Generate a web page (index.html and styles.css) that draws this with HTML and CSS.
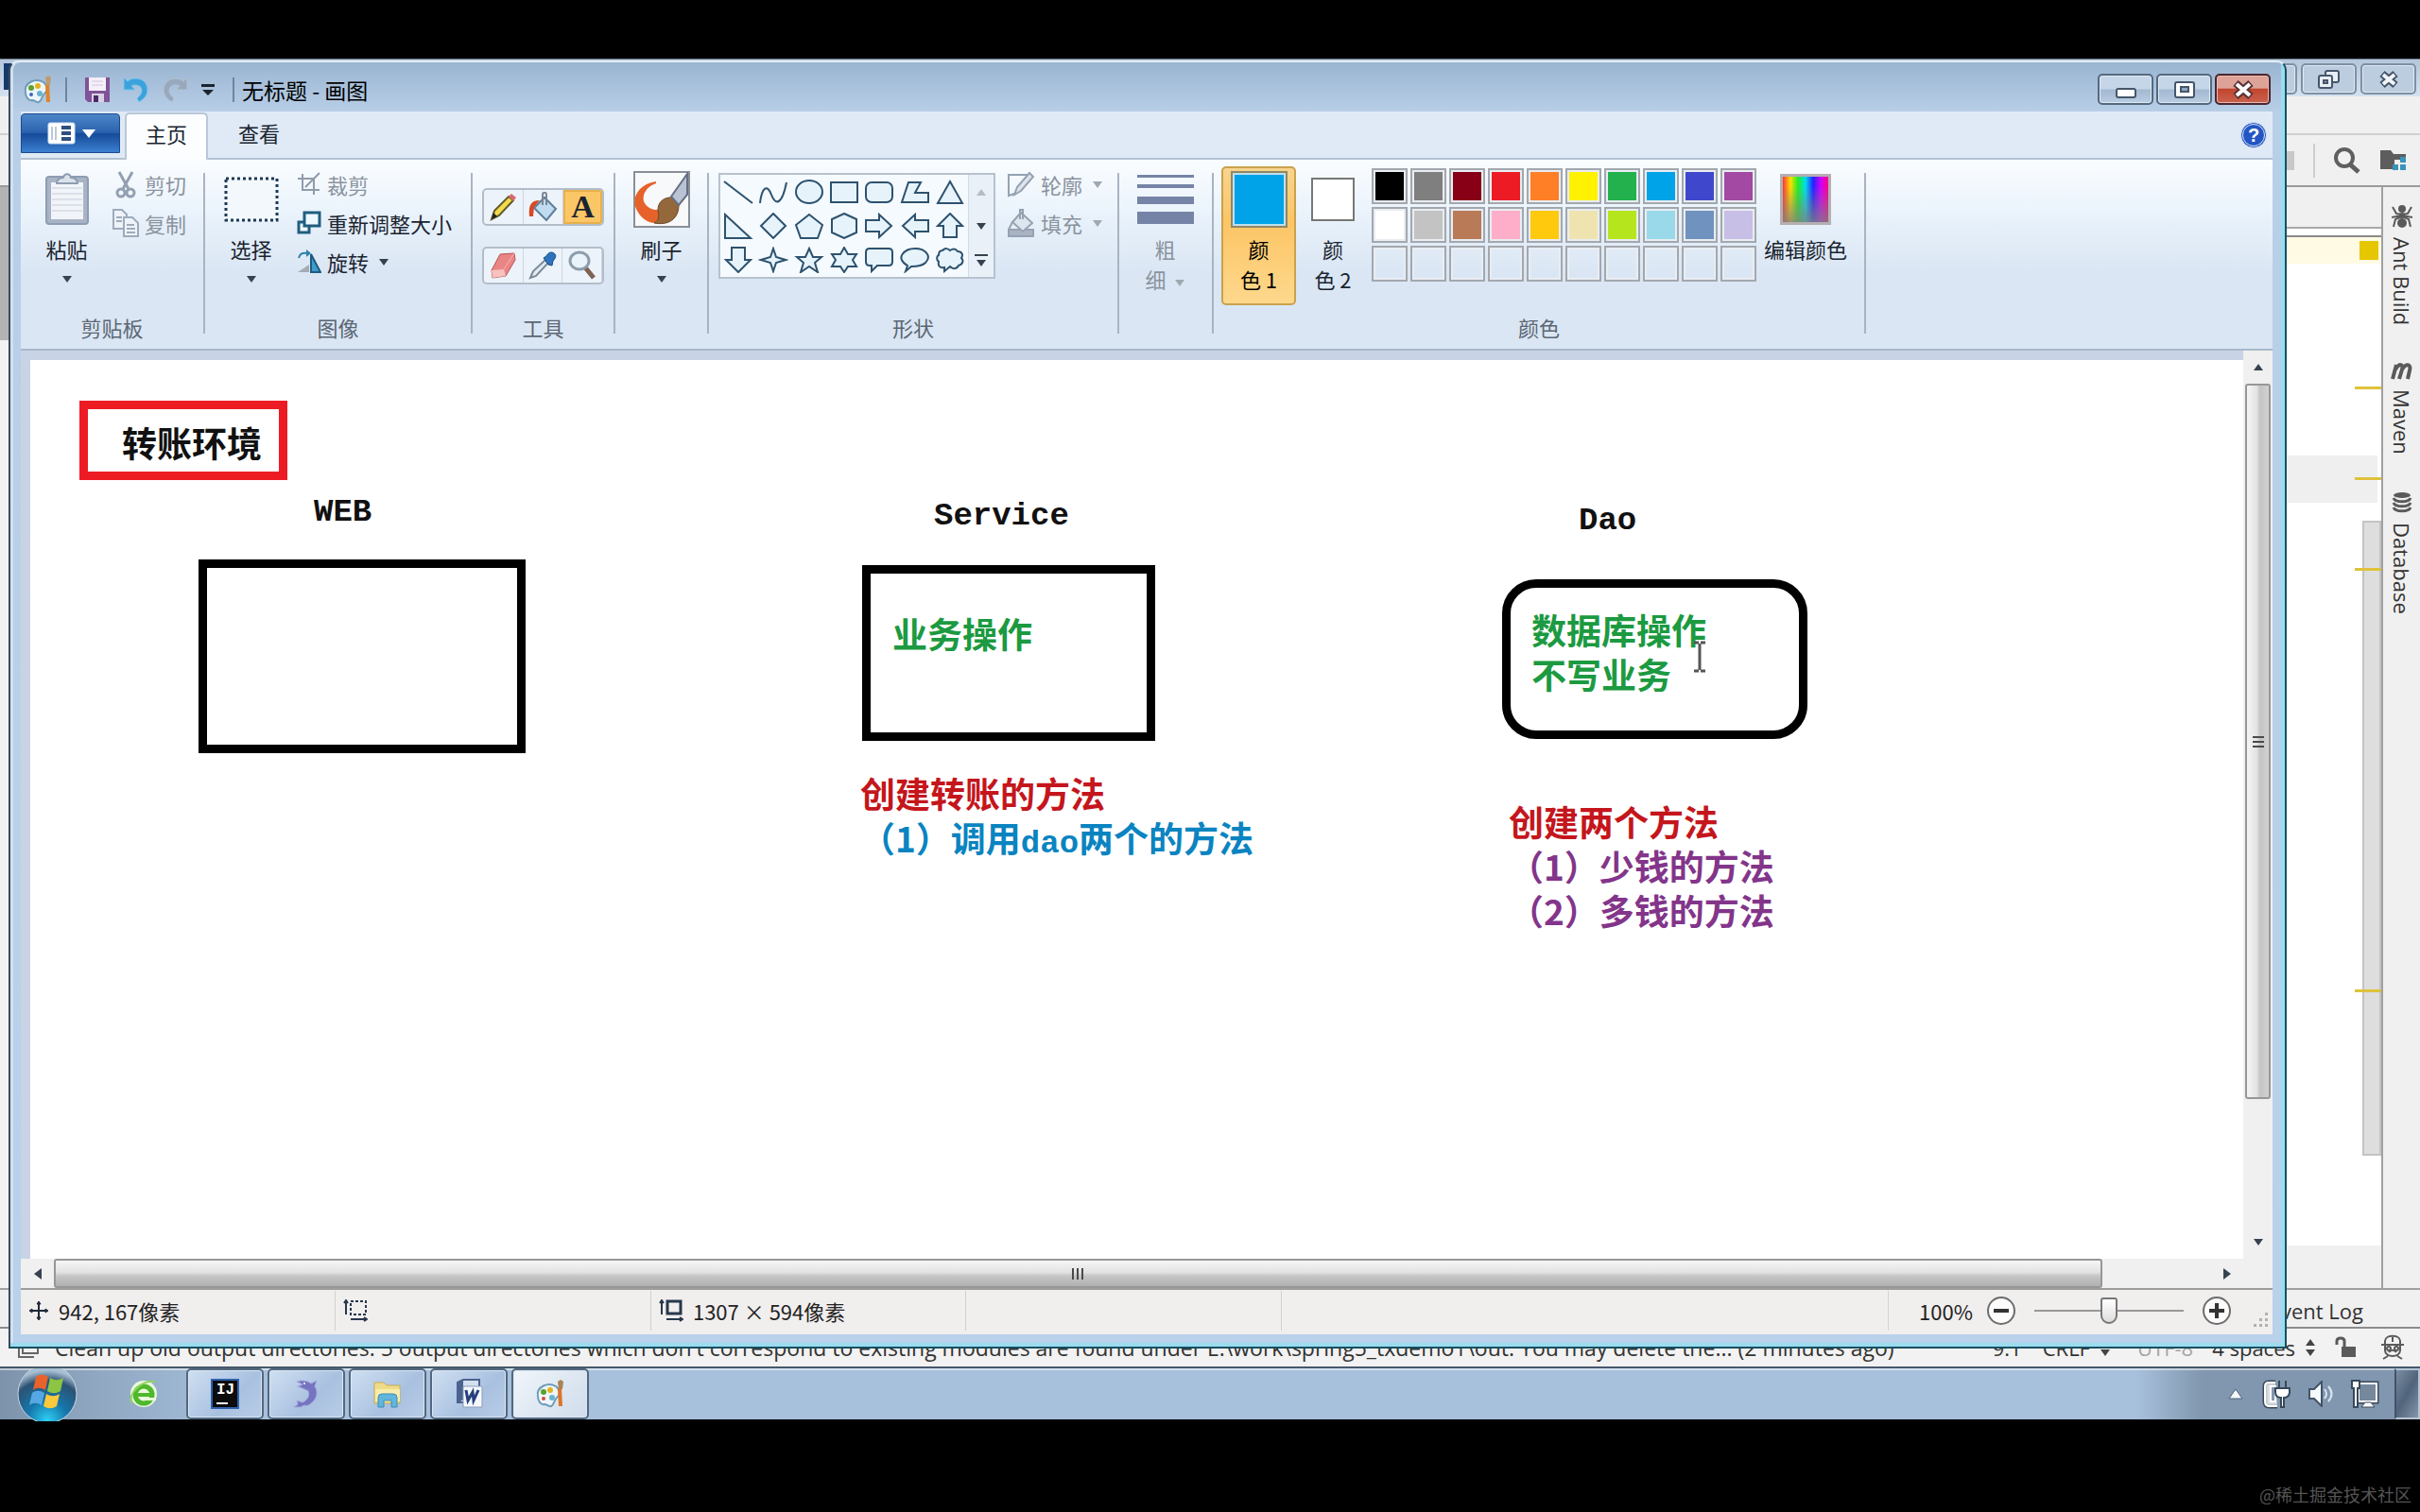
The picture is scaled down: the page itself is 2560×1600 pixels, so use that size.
FILE: index.html
```
<!DOCTYPE html>
<html lang="zh-CN">

<head>
    <meta charset="UTF-8" />
    <title>无标题 - 画图</title>
    <link rel="stylesheet" href="styles.css">
</head>

<body>
    <div class="desktop">

        <!-- IDE behind the paint window -->
        <div class="ide">
            <div class="ide-title">
                <span class="ide-logo"></span>
                <button class="win-btn faded" aria-label="最小化"></button>
                <button class="win-btn faded" aria-label="还原">
                    <svg width="26" height="22" viewBox="0 0 26 22"><g fill="#e8eef5" stroke="#46566a" stroke-width="2"><rect x="9" y="2" width="14" height="12" rx="2" /><rect x="2" y="7" width="14" height="13" rx="2" /><rect x="7" y="12" width="4" height="3" fill="#9fb2c8" /></g></svg>
                </button>
                <button class="win-btn faded" aria-label="关闭">
                    <svg width="24" height="20" viewBox="0 0 24 20"><path d="M5 4L19 16M19 4L5 16" stroke="#46566a" stroke-width="8" /><path d="M6 5L18 15M18 5L6 15" stroke="#f2f5f8" stroke-width="4" /></svg>
                </button>
            </div>
            <div class="ide-menu"></div>
            <div class="ide-toolbar">
                <span class="stop"></span>
                <span class="line"></span>
                <svg width="28" height="28" viewBox="0 0 28 28" fill="none" stroke="#5f5f5f" stroke-width="4"><circle cx="11" cy="11" r="9" /><path d="M17 18L26 26" stroke-width="5" /></svg>
                <svg width="30" height="26" viewBox="0 0 30 26"><path d="M1 2h11l3 4h13v6H16v10H1z" fill="#5d5d5d" /><path d="M22 9h6v6h-6zM14 17h6v6h-6zM22 17h6v6h-6z" fill="#3a93bb" /></svg>
            </div>
            <div class="ide-main">
                <div class="ide-left"></div>
                <div class="editor">
                    <div class="editor-tabs"></div>
                    <div class="editor-notice"><span class="warn"></span></div>
                    <div class="editor-code">
                        <div class="caret-row"></div>
                        <div class="thumb"></div>
                        <i class="mark mark-a"></i>
                        <i class="mark mark-b"></i>
                        <i class="mark mark-c"></i>
                        <i class="mark mark-d"></i>
                    </div>
                    <div class="editor-foot"></div>
                </div>
                <div class="ide-side">
                    <a href="#ant">
                        <svg width="22" height="26" viewBox="0 0 22 26"><g fill="#5a5a5a"><circle cx="11" cy="5" r="4" /><circle cx="11" cy="12" r="3" /><ellipse cx="11" cy="20" rx="5" ry="5" /></g><path d="M1 3l4 7 6 1 6-1 4-7M0 14l11-2 11 2M2 24l2-8 7-3 7 3 2 8" fill="none" stroke="#5a5a5a" stroke-width="2" /></svg>
                        <span>Ant Build</span>
                    </a>
                    <a href="#maven">
                        <svg width="24" height="20" viewBox="0 0 24 20"><path d="M2 18L6 3M5 8C9 1 14 2 12 8L9 18M12 8c4-7 10-6 8 1l-2 9" fill="none" stroke="#5a5a5a" stroke-width="4" /></svg>
                        <span>Maven</span>
                    </a>
                    <a href="#database">
                        <svg width="22" height="24" viewBox="0 0 22 24"><ellipse cx="11" cy="4" rx="9" ry="3" fill="#5a5a5a" /><path d="M2 7c2 5 16 5 18 0M2 12c2 5 16 5 18 0M2 17c2 5 16 5 18 0" fill="none" stroke="#5a5a5a" stroke-width="3" /></svg>
                        <span>Database</span>
                    </a>
                </div>
            </div>
            <div class="ide-tools">Event Log</div>
            <div class="ide-status">
                <svg class="box-icon" width="24" height="24" viewBox="0 0 24 24" fill="none" stroke="#666" stroke-width="2"><path d="M6 2h16v16H6zM2 6v16h16" /></svg>
                <span class="message">Clean up old output directories: 5 output directories which don't correspond to existing modules are found under E:\work\spring5_txdemo1\out. You may delete the... (2 minutes ago)</span>
                <span class="pos">9:1</span>
                <span class="crlf">CRLF</span>
                <svg class="updown" width="12" height="20" viewBox="0 0 12 20"><path d="M6 1l5 7H1zM6 19l5-7H1z" fill="#444" /></svg>
                <span class="muted">UTF-8</span>
                <span class="indent">4 spaces</span>
                <svg class="updown" width="12" height="20" viewBox="0 0 12 20"><path d="M6 1l5 7H1zM6 19l5-7H1z" fill="#444" /></svg>
                <svg class="lock" width="24" height="24" viewBox="0 0 24 24"><path d="M2 9V5c0-4 8-4 8 0v6" fill="none" stroke="#5a5a5a" stroke-width="3" /><path d="M7 11h15v11H7z" fill="#5a5a5a" /></svg>
                <svg class="hector" width="26" height="28" viewBox="0 0 26 28" fill="none" stroke="#5a5a5a" stroke-width="2"><path d="M5 10V7c0-7 16-7 16 0v3M1 11h24M5 12v5c0 8 16 8 16 0v-5M3 26l5-3M23 26l-5-3M13 3v5M9 19c2-3 6-3 8 0" /><circle cx="9" cy="15" r="2" /><circle cx="17" cy="15" r="2" /></svg>
            </div>
        </div>

        <!-- Paint window -->
        <div class="window">
            <div class="titlebar">
                <svg width="32" height="32" viewBox="0 0 32 32"><path d="M3 19C1 8 14 3 22 8c5 4 5 9 1 12-3 2-2 7-6 9-3 1-4-2-7-2-4 1-7-4-7-8z" fill="#eef6fb" stroke="#6f9cb8" stroke-width="2" /><circle cx="9" cy="14" r="3" fill="#5aa12f" /><circle cx="16" cy="12" r="3" fill="#e2b41c" /><circle cx="9" cy="21" r="2" fill="#3f66c4" /><circle cx="18" cy="20" r="3" fill="#67b4cd" /><path d="M26 10l1 19" stroke="#df8426" stroke-width="4" /><path d="M24 3l3-2 3 2-1 8h-4z" fill="#bd9c72" /></svg>
                <span class="bar"></span>
                <button class="quick" aria-label="保存">
                    <svg width="28" height="28" viewBox="0 0 28 28"><path d="M1 1h26v26H4l-3-3z" fill="#815398" /><path d="M5 1h18v14H5z" fill="#f5eff9" /><path d="M8 5h12M8 9h12" stroke="#cfc4da" stroke-width="1" /><path d="M8 18h13v9H8z" fill="#d8d2e4" /><path d="M10 20h5v7h-5z" fill="#4b2a66" /></svg>
                </button>
                <button class="quick" aria-label="撤消">
                    <svg width="28" height="28" viewBox="0 0 28 28"><path d="M1 1l4 4c2-2 5-3 8-3 9 0 13 6 13 12 0 6-4 10-9 13l-2-4c3-3 5-5 5-8 0-4-3-6-7-6-2 0-3 0-4 1l4 4H1z" fill="#3ba2dc" stroke="#7dc6ec" stroke-width="1" /></svg>
                </button>
                <button class="quick" aria-label="重做">
                    <svg width="28" height="28" viewBox="0 0 28 28"><path d="M27 1l-4 4c-2-2-5-3-8-3C6 2 2 8 2 14c0 6 4 10 9 13l2-4c-3-3-5-5-5-8 0-4 3-6 7-6 2 0 3 0 4 1l-4 4h12z" fill="#98a9be" stroke="#b5c3d3" stroke-width="1" /></svg>
                </button>
                <button class="quick" aria-label="自定义快速访问工具栏">
                    <svg width="16" height="14" viewBox="0 0 16 14"><path d="M1 1h14v3H1zM2 7h12l-6 6z" fill="#1b2430" /></svg>
                </button>
                <span class="bar"></span>
                <span class="caption">无标题 - 画图</span>
                <div class="win-btns">
                    <button class="win-btn" aria-label="最小化">
                        <svg width="24" height="20" viewBox="0 0 24 20"><rect x="2" y="9" width="20" height="9" rx="2" fill="#fff" stroke="#46566a" stroke-width="2" /></svg>
                    </button>
                    <button class="win-btn" aria-label="最大化">
                        <svg width="24" height="20" viewBox="0 0 24 20"><rect x="2" y="2" width="20" height="16" rx="2" fill="#fff" stroke="#46566a" stroke-width="2" /><rect x="8" y="7" width="8" height="5" fill="#8fa6bf" stroke="#46566a" stroke-width="2" /></svg>
                    </button>
                    <button class="win-btn close" aria-label="关闭">
                        <svg width="24" height="20" viewBox="0 0 24 20"><path d="M4 3L20 17M20 3L4 17" stroke="#5a3236" stroke-width="8" /><path d="M5 4L19 16M19 4L5 16" stroke="#fff" stroke-width="4" /></svg>
                    </button>
                </div>
            </div>

            <div class="tabs">
                <button class="file-btn" aria-label="画图">
                    <svg width="52" height="26" viewBox="0 0 52 26"><rect x="2" y="2" width="28" height="22" rx="2" fill="#fff" stroke="#cfe0f5" stroke-width="1" /><path d="M6 6v14M10 6v14" stroke="#bcc8d8" stroke-width="2" /><path d="M16 5h10v4H16zM16 11h10v4H16zM16 17h10v4H16z" fill="#2f4f80" /><path d="M38 9h14l-7 9z" fill="#fff" /></svg>
                </button>
                <button class="tab active">主页</button>
                <button class="tab">查看</button>
                <button class="help" aria-label="帮助">?</button>
            </div>

            <div class="ribbon">
                <div class="group clipboard">
                    <div class="group-body">
                        <button class="big">
                            <span class="pic"><svg width="48" height="56" viewBox="0 0 48 56"><rect x="2" y="4" width="44" height="50" rx="3" fill="#a8b4c5" stroke="#8f9db2" stroke-width="2" /><path d="M7 10h34v39H7z" fill="#f1f4f9" /><path d="M8 16h32M8 22h32M8 28h32M8 34h32M8 40h32" stroke="#dbe1ea" stroke-width="2" /><path d="M13 11c0-5 5-6 7-6 1-5 7-5 8 0 2 0 7 1 7 6z" fill="#dbe2eb" stroke="#8f9db2" stroke-width="2" /></svg></span>
                            <span>粘贴</span>
                            <span class="arrow"></span>
                        </button>
                        <div class="rows">
                            <button class="small" disabled>
                                <svg width="28" height="30" viewBox="0 0 28 30" fill="none" stroke="#93a0b2" stroke-width="3"><path d="M7 2l10 18M21 2L11 20" /><circle cx="9" cy="24" r="4" /><circle cx="19" cy="24" r="4" /></svg>
                                剪切
                            </button>
                            <button class="small" disabled>
                                <svg width="28" height="30" viewBox="0 0 28 30" fill="#eef3f9" stroke="#9eabbd" stroke-width="2"><path d="M1 1h9l5 5v15H1z" /><path d="M12 9h9l6 6v14H12z" /><path d="M15 17h8M15 21h9M15 25h9M4 9h6M4 13h6" /></svg>
                                复制
                            </button>
                        </div>
                    </div>
                    <div class="group-name">剪贴板</div>
                </div>
                <div class="sep"></div>

                <div class="group image">
                    <div class="group-body">
                        <button class="big">
                            <span class="pic"><svg width="58" height="48" viewBox="0 0 58 48"><rect x="2" y="2" width="54" height="44" fill="#f3f8fd" stroke="#1d3a55" stroke-width="3" stroke-dasharray="3 3" /></svg></span>
                            <span>选择</span>
                            <span class="arrow"></span>
                        </button>
                        <div class="rows">
                            <button class="small" disabled>
                                <svg width="26" height="26" viewBox="0 0 26 26" fill="none" stroke="#8f9bac" stroke-width="2"><path d="M6 2v17h18M1 7h17v17M24 1L9 16" /></svg>
                                裁剪
                            </button>
                            <button class="small">
                                <svg width="26" height="26" viewBox="0 0 26 26" fill="#eef8fd" stroke="#205d80" stroke-width="3"><path d="M2 12h11v11H2z" /><path d="M8 2h16v14H8z" /></svg>
                                重新调整大小
                            </button>
                            <button class="small">
                                <svg width="26" height="26" viewBox="0 0 26 26"><path d="M1 24l12-8v8z" fill="#a5abb3" /><path d="M15 24V5l10 19z" fill="#3c9ccc" stroke="#1e5a80" stroke-width="2" /><path d="M2 9c1-5 5-6 9-5" fill="none" stroke="#2f80ad" stroke-width="2" /><path d="M10 0l5 4-5 4z" fill="#2f80ad" /></svg>
                                旋转 <span class="arrow"></span>
                            </button>
                        </div>
                    </div>
                    <div class="group-name">图像</div>
                </div>
                <div class="sep"></div>

                <div class="group tools">
                    <div class="group-body">
                        <div class="tool-row">
                            <button aria-label="铅笔"><svg width="32" height="32" viewBox="0 0 32 32"><path d="M3 29l3-9L21 5l5 4-15 16z" fill="#f1da4c" stroke="#625a2c" stroke-width="2" /><path d="M21 5l3-3 5 4-3 4z" fill="#d76a6e" /><path d="M3 29l2-7 4 4z" fill="#222" /></svg></button>
                            <button aria-label="用颜色填充"><svg width="34" height="32" viewBox="0 0 34 32"><path d="M7 17L18 6l12 12-10 12z" fill="#bfdcf0" stroke="#5f7e9b" stroke-width="2" /><path d="M16 14V3c0-3 4-3 4 0v11" fill="none" stroke="#7b8794" stroke-width="2" /><path d="M2 26C1 15 3 9 13 9l-6 7-1 10z" fill="#d64a25" /></svg></button>
                            <button class="on letter" aria-label="文本">A</button>
                        </div>
                        <div class="tool-row">
                            <button aria-label="橡皮擦"><svg width="34" height="30" viewBox="0 0 34 30"><path d="M5 20L14 3l15-1 1 7-10 17-14 2z" fill="#ea8585" stroke="#b65555" stroke-width="1" /><path d="M5 20l13-1 2 7-14 2z" fill="#f7c2bf" /><path d="M18 19L29 2" stroke="#f5b5b2" stroke-width="1" /></svg></button>
                            <button aria-label="颜色选取器"><svg width="32" height="32" viewBox="0 0 32 32"><path d="M3 29l3-7 13-12 3 3L9 27z" fill="#e3ecf3" stroke="#7b8b9b" stroke-width="2" /><path d="M17 8l3-2c2-4 5-5 8-3s2 5-1 8l-1 5-4-1z" fill="#2e74bc" stroke="#184b86" stroke-width="1" /></svg></button>
                            <button aria-label="放大镜"><svg width="32" height="32" viewBox="0 0 32 32"><path d="M19 18l9 11" stroke="#7e6254" stroke-width="5" /><ellipse cx="13" cy="11" rx="10" ry="9" fill="#e9f3fa" stroke="#8d9dab" stroke-width="3" /></svg></button>
                        </div>
                    </div>
                    <div class="group-name">工具</div>
                </div>
                <div class="sep"></div>

                <div class="group brush">
                    <div class="group-body">
                        <button class="big">
                            <span class="pic"><svg width="60" height="60" viewBox="0 0 60 60"><rect x="1" y="1" width="58" height="58" fill="#f7f9fb" stroke="#8a8f97" stroke-width="2" /><path d="M24 11C4 14-2 30 3 40c4 9 12 15 20 15 4-4 6-9 5-15-6 3-14-1-17-8-2-8 4-16 13-19z" fill="#e6622a" /><path d="M26 41c0-8 6-14 16-13l6 8C48 50 38 58 22 55c6-3 5-8 4-14z" fill="#94683a" stroke="#6c4725" stroke-width="1" /><path d="M40 27L57 3v22l-9 11z" fill="#b9c3d4" stroke="#646f84" stroke-width="2" /></svg></span>
                            <span>刷子</span>
                            <span class="arrow"></span>
                        </button>
                    </div>
                </div>
                <div class="sep"></div>

                <div class="group shapes">
                    <div class="group-body">
                        <div class="shape-box">
                            <div class="shape-grid">
                                <button aria-label="直线"><svg viewBox="0 0 32 28"><path d="M1 3L31 26" /></svg></button>
                                <button aria-label="曲线"><svg viewBox="0 0 32 28"><path d="M2 26C4 8 10 6 14 17s11 12 16-13" /></svg></button>
                                <button aria-label="椭圆形"><svg viewBox="0 0 32 28"><ellipse cx="16" cy="14" rx="14" ry="12" /></svg></button>
                                <button aria-label="矩形"><svg viewBox="0 0 32 28"><path d="M2 4h28v21H2z" /></svg></button>
                                <button aria-label="圆角矩形"><svg viewBox="0 0 32 28"><rect x="2" y="4" width="28" height="21" rx="6" /></svg></button>
                                <button aria-label="多边形"><svg viewBox="0 0 32 28"><path d="M9 4h13l-6 11h14v10H2z" /></svg></button>
                                <button aria-label="三角形"><svg viewBox="0 0 32 28"><path d="M16 3l13 23H3z" /></svg></button>
                                <button aria-label="直角三角形"><svg viewBox="0 0 32 28"><path d="M2 2l27 25H2z" /></svg></button>
                                <button aria-label="菱形"><svg viewBox="0 0 32 28"><path d="M16 1l13 13-13 13L3 14z" /></svg></button>
                                <button aria-label="五边形"><svg viewBox="0 0 32 28"><path d="M16 2l14 11-5 14H7L2 13z" /></svg></button>
                                <button aria-label="六边形"><svg viewBox="0 0 32 28"><path d="M16 1l13 6v14l-13 6-13-6V7z" /></svg></button>
                                <button aria-label="右箭头"><svg viewBox="0 0 32 28"><path d="M2 8h14V2l13 12-13 12v-6H2z" /></svg></button>
                                <button aria-label="左箭头"><svg viewBox="0 0 32 28"><path d="M30 8H16V2L3 14l13 12v-6h14z" /></svg></button>
                                <button aria-label="上箭头"><svg viewBox="0 0 32 28"><path d="M16 1l13 13h-6v12H9V14H3z" /></svg></button>
                                <button aria-label="下箭头"><svg viewBox="0 0 32 28"><path d="M9 1h14v13h6L16 27 3 14h6z" /></svg></button>
                                <button aria-label="四角星形"><svg viewBox="0 0 32 28"><path d="M16 2l3 9 10 3-10 3-3 9-3-9-10-3 10-3z" /></svg></button>
                                <button aria-label="五角星形"><svg viewBox="0 0 32 28"><path d="M16 2l4 9h9l-7 6 3 10-9-6-9 6 3-10-7-6h9z" /></svg></button>
                                <button aria-label="六角星形"><svg viewBox="0 0 32 28"><path d="M16 1l4 7h9l-4 6 4 7h-9l-4 6-4-6H3l4-7-4-6h9z" /></svg></button>
                                <button aria-label="圆角矩形标注"><svg viewBox="0 0 32 28"><path d="M6 2h20q4 0 4 4v10q0 4-4 4H14l-6 6v-6H6q-4 0-4-4V6q0-4 4-4z" /></svg></button>
                                <button aria-label="椭圆形标注"><svg viewBox="0 0 32 28"><path d="M6 26l2-6C-6 12 5 2 16 2s18 8 11 15c-4 4-10 4-15 4z" /></svg></button>
                                <button aria-label="云形标注"><svg viewBox="0 0 32 28"><path d="M8 4c3-3 6-2 8 0 3-2 6-2 8 1 5 0 6 4 4 7 3 3 1 7-3 8-2 4-6 4-9 1l-6 5v-4c-5 1-7-2-6-6-3-3-2-6 0-7 0-3 1-5 4-5z" /></svg></button>
                            </div>
                            <div class="shape-scroll">
                                <button aria-label="向上"><span class="arrow up dim"></span></button>
                                <button aria-label="向下"><span class="arrow"></span></button>
                                <button class="more" aria-label="其他"><span class="arrow"></span></button>
                            </div>
                        </div>
                        <div class="rows">
                            <button class="small" disabled>
                                <svg width="30" height="28" viewBox="0 0 30 28" fill="#dde5ee" stroke="#96a2b2" stroke-width="2"><path d="M22 4H2v22l6-2" fill="none" /><path d="M8 25l3-8L24 2l4 4-13 15z" /></svg>
                                轮廓 <span class="arrow dim"></span>
                            </button>
                            <button class="small" disabled>
                                <svg width="30" height="32" viewBox="0 0 30 32" fill="#dde5ee" stroke="#96a2b2" stroke-width="2"><path d="M2 23h26v7H2z" fill="#a9b4c2" /><path d="M6 15l9-10 12 11-10 9z" /><path d="M14 12V2h3v10M6 15l-4 8" fill="none" /></svg>
                                填充 <span class="arrow dim"></span>
                            </button>
                        </div>
                    </div>
                    <div class="group-name">形状</div>
                </div>
                <div class="sep"></div>

                <div class="group stroke">
                    <div class="group-body">
                        <button class="big" disabled>
                            <span class="pic"><svg width="60" height="54" viewBox="0 0 60 54" fill="#7584a6"><path d="M0 1h60v3H0zM0 11h60v4H0zM0 24h60v8H0zM0 40h60v13H0z" /></svg></span>
                            <span>粗</span>
                            <span>细 <span class="arrow dim"></span></span>
                        </button>
                    </div>
                </div>
                <div class="sep"></div>

                <div class="group colors">
                    <div class="group-body">
                        <button class="big picked">
                            <span class="pic"><span class="swatch first"></span></span>
                            <span>颜<br>色 1</span>
                        </button>
                        <button class="big second">
                            <span class="pic"><span class="swatch"></span></span>
                            <span>颜<br>色 2</span>
                        </button>
                        <div class="palette">
                            <button class="black" aria-label="黑色"></button>
                            <button class="gray" aria-label="灰色-50%"></button>
                            <button class="darkred" aria-label="深红色"></button>
                            <button class="red" aria-label="红色"></button>
                            <button class="orange" aria-label="橙色"></button>
                            <button class="yellow" aria-label="黄色"></button>
                            <button class="green" aria-label="绿色"></button>
                            <button class="turquoise" aria-label="青绿"></button>
                            <button class="indigo" aria-label="靛青"></button>
                            <button class="purple" aria-label="紫色"></button>
                            <button class="white" aria-label="白色"></button>
                            <button class="silver" aria-label="灰色-25%"></button>
                            <button class="brown" aria-label="褐色"></button>
                            <button class="rose" aria-label="玫瑰色"></button>
                            <button class="gold" aria-label="金色"></button>
                            <button class="cream" aria-label="浅黄色"></button>
                            <button class="lime" aria-label="酸橙色"></button>
                            <button class="sky" aria-label="淡青绿色"></button>
                            <button class="bluegray" aria-label="蓝灰色"></button>
                            <button class="lavender" aria-label="淡紫色"></button>
                            <button aria-label="自定义 1"></button>
                            <button aria-label="自定义 2"></button>
                            <button aria-label="自定义 3"></button>
                            <button aria-label="自定义 4"></button>
                            <button aria-label="自定义 5"></button>
                            <button aria-label="自定义 6"></button>
                            <button aria-label="自定义 7"></button>
                            <button aria-label="自定义 8"></button>
                            <button aria-label="自定义 9"></button>
                            <button aria-label="自定义 10"></button>
                        </div>
                        <button class="big edit">
                            <span class="pic"><span class="rainbow"></span></span>
                            <span>编辑颜色</span>
                        </button>
                    </div>
                    <div class="group-name">颜色</div>
                </div>
                <div class="sep"></div>
            </div>

            <div class="stage">
                <div class="canvas">
                    <div class="shape title-box"></div>
                    <p class="text title-text">转账环境</p>

                    <p class="text latin web-name">WEB</p>
                    <div class="shape web-box"></div>

                    <p class="text latin service-name">Service</p>
                    <div class="shape service-box"></div>
                    <p class="text green-ink service-text">业务操作</p>
                    <p class="text service-note"><span class="red-ink">创建转账的方法</span><br><span class="blue-ink">（1）调用<span class="latin">dao</span>两个的方法</span></p>

                    <p class="text latin dao-name">Dao</p>
                    <div class="shape dao-box"></div>
                    <p class="text green-ink dao-text">数据库操作<br>不写业务</p>
                    <p class="text dao-note"><span class="red-ink">创建两个方法</span><br><span class="purple-ink">（1）少钱的方法<br>（2）多钱的方法</span></p>

                    <svg class="ibeam" width="16" height="34" viewBox="0 0 16 34"><path d="M2 2h5M9 2h5M8 3v28M2 32h5M9 32h5" fill="none" stroke="#555" stroke-width="3" /></svg>
                </div>
                <div class="vscroll">
                    <button aria-label="向上滚动"><span class="arrow up"></span></button>
                    <div class="track"><div class="knob"><i></i><i></i><i></i></div></div>
                    <button aria-label="向下滚动"><span class="arrow"></span></button>
                </div>
            </div>
            <div class="hscroll">
                <button aria-label="向左滚动"><span class="arrow left"></span></button>
                <div class="track"><div class="knob"><i></i><i></i><i></i></div></div>
                <button aria-label="向右滚动"><span class="arrow right"></span></button>
                <div class="corner"></div>
            </div>

            <div class="statusbar">
                <div class="cell">
                    <svg width="22" height="22" viewBox="0 0 22 22" stroke="#1f2a3a" stroke-width="2" fill="#1f2a3a"><path d="M11 3v16M3 11h16" /><path d="M11 1l2 3H9zM11 21l2-3H9zM1 11l3-2v4zM21 11l-3-2v4z" stroke-width="1" /></svg>
                    942, 167像素
                </div>
                <div class="cell">
                    <svg width="26" height="24" viewBox="0 0 26 24" fill="none" stroke="#26384c" stroke-width="2"><path d="M8 2h16v14H8z" stroke-dasharray="3 2" /><path d="M3 2v14M1 4l2-3 2 3M8 21h16M22 19l3 2-3 2" /></svg>
                </div>
                <div class="cell">
                    <svg width="26" height="24" viewBox="0 0 26 24" fill="none" stroke="#26384c" stroke-width="2"><path d="M9 2h14v13H9z" stroke-width="3" /><path d="M3 2v14M1 4l2-3 2 3M8 21h16M22 19l3 2-3 2" /></svg>
                    1307 × 594像素
                </div>
                <div class="cell"></div>
                <div class="cell wide"></div>
                <div class="zoom">
                    <label for="zoom">100%</label>
                    <button class="round" aria-label="缩小"><svg width="18" height="18" viewBox="0 0 18 18"><path d="M1 7h16v4H1z" fill="#333" /></svg></button>
                    <input type="range" id="zoom" min="0" max="100" value="50">
                    <button class="round" aria-label="放大"><svg width="18" height="18" viewBox="0 0 18 18"><path d="M1 7h6V1h4v6h6v4h-6v6H7v-6H1z" fill="#333" /></svg></button>
                </div>
                <svg class="grip" width="18" height="18" viewBox="0 0 18 18" fill="#b5b0b0"><path d="M12 0h3v3h-3zM6 6h3v3H6zM12 6h3v3h-3zM0 12h3v3H0zM6 12h3v3H6zM12 12h3v3h-3z" /></svg>
            </div>
        </div>

        <!-- Taskbar -->
        <div class="taskbar">
            <button class="start" aria-label="开始">
                <svg width="64" height="56" viewBox="0 0 64 56">
                    <defs>
                        <radialGradient id="orb" cx="50%" cy="95%" r="85%">
                            <stop offset="0" stop-color="#2fd0f5" />
                            <stop offset="0.4" stop-color="#1577ab" />
                            <stop offset="0.8" stop-color="#2c5273" />
                            <stop offset="1" stop-color="#a9bfd3" />
                        </radialGradient>
                    </defs>
                    <ellipse cx="32" cy="27" rx="31" ry="31" fill="url(#orb)" stroke="#c5d6e4" stroke-width="1" />
                    <path d="M20 9c4-3 8-3 13 0l-3 14c-5-3-9-3-13 0z" fill="#e8622c" />
                    <path d="M35 10c5 3 9 3 14 0l-3 14c-5 3-9 3-14 0z" fill="#8cc543" />
                    <path d="M16 26c4-3 8-3 13 0l-3 13c-5-3-9-3-13 0z" fill="#56a8e4" />
                    <path d="M31 27c5 3 9 3 14 0l-3 13c-5 3-9 3-14 0z" fill="#fbc93c" />
                </svg>
            </button>
            <button class="pin" aria-label="浏览器">
                <svg width="32" height="32" viewBox="0 0 32 32"><ellipse cx="16" cy="16" rx="14" ry="14" fill="#eaf8dd" /><circle cx="16" cy="17" r="9" fill="none" stroke="#4fb82c" stroke-width="5" /><path d="M8 17h17" stroke="#4fb82c" stroke-width="4" /><path d="M19 20h10v3H19z" fill="#eaf8dd" /><path d="M4 26C-2 16 14 1 28 3" fill="none" stroke="#8fd65e" stroke-width="2" /></svg>
            </button>
            <button class="task" aria-label="IntelliJ IDEA">
                <span class="ij">IJ</span>
            </button>
            <button class="task" aria-label="MySQL 客户端">
                <svg width="32" height="32" viewBox="0 0 32 32"><path d="M6 3c5-2 11-1 15 2l6-3-2 6c4 6 2 14-4 18-2 2-5 3-7 2l-4 2-7 0 4-3-1-4 6 2c5-2 8-7 6-12-3-2-7-3-11-5 2-1 4-1 5-2-2-1-4-2-6-3z" fill="#7474c0" stroke="#a9a9dd" stroke-width="1" /><circle cx="14" cy="5" r="1" fill="#fff" /></svg>
            </button>
            <button class="task" aria-label="资源管理器">
                <svg width="34" height="32" viewBox="0 0 34 32"><path d="M3 4h10l3 3h14v19H3z" fill="#efdb86" stroke="#c7ad55" stroke-width="1" /><path d="M4 11h26v13H4z" fill="#f8ecab" /><path d="M7 30V20q0-4 4-4h12q4 0 4 4v10h-6v-7h-8v7z" fill="#62b6dc" stroke="#3d8db8" stroke-width="1" /></svg>
            </button>
            <button class="task" aria-label="Word">
                <svg width="32" height="32" viewBox="0 0 32 32"><path d="M4 4l6-3h17v24H4z" fill="#d4dff0" stroke="#4b638e" stroke-width="2" /><path d="M4 4l6-3v21l-6 4z" fill="#4b638e" /><path d="M10 8h20v22H10z" fill="#f5f8fd" stroke="#8d9dbb" stroke-width="1" /><path d="M13 12l2 11 5-9 1 9 5-11" fill="none" stroke="#27407c" stroke-width="3" /></svg>
            </button>
            <button class="task current" aria-label="画图">
                <svg width="32" height="32" viewBox="0 0 32 32"><path d="M3 19C1 8 14 3 22 8c5 4 5 9 1 12-3 2-2 7-6 9-3 1-4-2-7-2-4 1-7-4-7-8z" fill="#eef6fb" stroke="#6f9cb8" stroke-width="2" /><circle cx="9" cy="14" r="3" fill="#5aa12f" /><circle cx="16" cy="12" r="3" fill="#e2b41c" /><circle cx="9" cy="21" r="2" fill="#d44a3a" /><circle cx="18" cy="20" r="3" fill="#67b4cd" /><path d="M26 10l1 19" stroke="#df7426" stroke-width="4" /><path d="M24 3l3-2 3 2-1 8h-4z" fill="#a98455" /></svg>
            </button>
            <div class="tray">
                <svg width="16" height="12" viewBox="0 0 16 12"><path d="M8 1l7 10H1z" fill="#f4f8fc" stroke="#4d6278" stroke-width="1" /></svg>
                <svg width="32" height="32" viewBox="0 0 32 32"><path d="M14 4H7Q3 4 3 8v16q0 5 5 5h8" fill="none" stroke="#38485a" stroke-width="5" /><path d="M14 4H7Q3 4 3 8v16q0 5 5 5h8M9 8h5v16H9z" fill="#fff" fill-opacity="0.7" stroke="#fff" stroke-width="2" /><path d="M18 2v8M25 2v8M14 10h15v5q-1 5-6 5v10h-3V20q-6 0-6-6z" fill="#fff" stroke="#38485a" stroke-width="2" /></svg>
                <svg width="28" height="28" viewBox="0 0 28 28"><path d="M2 9h5l8-8v26l-8-8H2z" fill="#f7fafc" stroke="#42546a" stroke-width="2" /><path d="M18 9q4 5 0 10M22 6q7 8 0 16" fill="none" stroke="#d8e6f2" stroke-width="2" /></svg>
                <svg width="32" height="32" viewBox="0 0 32 32"><path d="M10 5h19v19H10z" fill="#76889c" stroke="#38485a" stroke-width="5" /><path d="M10 5h19v19H10z" fill="#76889c" stroke="#fff" stroke-width="2" /><path d="M13 30h14l-4-5h-6z" fill="#fff" stroke="#38485a" stroke-width="1" /><path d="M3 2h8v8H9v20H5V10H3z" fill="#fff" stroke="#38485a" stroke-width="2" /></svg>
            </div>
            <button class="show-desktop" aria-label="显示桌面"></button>
        </div>
    </div>
    <div class="watermark">@稀土掘金技术社区</div>
</body>

</html>
```
FILE: styles.css
```
* {
    box-sizing: border-box;
}

body {
    margin: 0;
    padding-top: 62px;
    height: 100vh;
    display: flex;
    flex-direction: column;
    background-color: #000;
    font-family: "Noto Sans CJK SC", sans-serif;
    font-size: 22px;
    color: #1a2430;
    overflow: hidden;
}

button {
    font: inherit;
    color: inherit;
    background: none;
    border: none;
    padding: 0;
    margin: 0;
}

a {
    color: inherit;
    text-decoration: none;
}

.desktop {
    position: relative;
    flex: 1;
    display: flex;
    flex-direction: column;
}

.watermark {
    height: 98px;
    padding: 66px 9px 0 0;
    text-align: right;
    font-size: 18px;
    line-height: 26px;
    color: #555;
}

/* IDE */

.ide {
    flex: 1;
    display: flex;
    flex-direction: column;
    background-color: #f0f0f0;
    font-family: "Open Sans", sans-serif;
    color: #333;
}

.ide-title {
    height: 40px;
    padding: 4px 4px 0 0;
    display: flex;
    justify-content: flex-end;
    gap: 4px;
    background: linear-gradient(#b4c6da, #d5e2f0);
    border-top: 1px solid #6f7f90;
}

.ide-logo {
    width: 26px;
    height: 28px;
    margin: 0 auto 0 4px;
    background-color: #163a6c;
}

.ide-menu {
    height: 41px;
    border-bottom: 2px solid #d0d0d0;
}

.ide-toolbar {
    height: 55px;
    padding-right: 13px;
    display: flex;
    justify-content: flex-end;
    align-items: center;
    gap: 20px;
    border-bottom: 2px solid #9a9a9a;
}

.ide-toolbar .stop {
    width: 22px;
    height: 20px;
    background-color: #c8c8c8;
}

.ide-toolbar .line {
    width: 2px;
    height: 36px;
    background-color: #cdcdcd;
}

.ide-main {
    flex: 1;
    display: flex;
}

.ide-left {
    width: 40px;
    background: linear-gradient(#b3b3b3 162px, #f2f2f2 162px);
}

.editor {
    flex: 1;
    display: flex;
    flex-direction: column;
    background-color: #fff;
}

.editor-tabs {
    height: 44px;
    background-color: #f0f0f0;
    border-bottom: 2px solid #a9a9a9;
}

.editor-notice {
    height: 38px;
    margin-top: 7px;
    padding: 4px 3px 0 0;
    display: flex;
    justify-content: flex-end;
    border-top: 2px solid #8a8a8a;
    background: linear-gradient(#fffae3 28px, #fff 28px);
}

.warn {
    width: 20px;
    height: 20px;
    background-color: #e6c600;
}

.editor-code {
    flex: 1;
    position: relative;
}

.caret-row {
    position: absolute;
    top: 195px;
    left: 0;
    right: 4px;
    height: 50px;
    background-color: #efefef;
}

.thumb {
    position: absolute;
    top: 264px;
    right: 0;
    width: 20px;
    height: 672px;
    background-color: #dedede;
    border: 2px solid #c3c3c3;
}

.mark {
    position: absolute;
    right: 0;
    width: 28px;
    height: 3px;
    background-color: #dfc23a;
}

.mark-a {
    top: 122px;
}

.mark-b {
    top: 218px;
}

.mark-c {
    top: 314px;
}

.mark-d {
    top: 760px;
}

.editor-foot {
    height: 45px;
    background-color: #f0f0f0;
}

.ide-side {
    width: 41px;
    padding-top: 18px;
    display: flex;
    flex-direction: column;
    align-items: center;
    gap: 39px;
    border-left: 2px solid #a0a0a0;
    font-size: 22px;
}

.ide-side a {
    display: flex;
    flex-direction: column;
    align-items: center;
    gap: 9px;
}

.ide-side span {
    writing-mode: vertical-rl;
    line-height: 28px;
}

.ide-tools {
    height: 43px;
    padding-right: 60px;
    border-top: 2px solid #a0a0a0;
    border-bottom: 2px solid #8c8c8c;
    text-align: right;
    line-height: 44px;
}

.ide-status {
    height: 40px;
    padding: 0 16px 0 18px;
    display: flex;
    align-items: center;
    background-color: #f2f2f2;
    line-height: 40px;
    white-space: nowrap;
}

.ide-status .message {
    margin-left: 16px;
    margin-right: auto;
    font-size: 23px;
}

.ide-status .pos {
    margin-right: 22px;
}

.ide-status .crlf {
    margin-right: 10px;
}

.ide-status .muted {
    margin: 0 20px 0 28px;
    color: #a5a5a5;
}

.ide-status .indent {
    margin-right: 10px;
}

.ide-status .lock {
    margin: 0 24px 0 20px;
}

/* Paint window */

.window {
    position: absolute;
    top: 2px;
    right: 141px;
    bottom: 75px;
    left: 9px;
    padding: 0 13px 13px 11px;
    display: flex;
    flex-direction: column;
    border: 2px solid #155060;
    border-top-color: #e3edf6;
    border-left-color: #3d4b5c;
    border-radius: 10px 10px 0 0;
    background: linear-gradient(#9ab5d1, #b9cfe8 54px, #b9d1ea);
    box-shadow: inset -4px -4px 0 #9bdcf0, inset 3px 0 0 #d0e1f2;
}

.titlebar {
    height: 52px;
    padding: 5px 0 0 2px;
    display: flex;
    align-items: center;
}

.bar {
    width: 2px;
    height: 26px;
    margin: 0 18px 0 13px;
    background-color: #6f859d;
}

.quick {
    display: flex;
    margin-right: 13px;
}

.titlebar .quick + .bar {
    margin: 0 8px 0 5px;
}

.caption {
    color: #000;
    font-size: 23px;
    line-height: 30px;
}

.win-btns {
    margin-left: auto;
    padding-right: 2px;
    display: flex;
    gap: 3px;
}

.win-btn {
    width: 59px;
    height: 33px;
    display: flex;
    align-items: center;
    justify-content: center;
    border: 2px solid #55697f;
    border-radius: 5px;
    background: linear-gradient(#c5d6e8 48%, #a3b9d1 52%, #b9cde2);
    box-shadow: inset 0 0 0 1px #dfe9f3;
}

.win-btn.close {
    border-color: #4a2630;
    background: linear-gradient(#dda398 45%, #c2452f 50%, #c9634e);
    box-shadow: inset 0 0 0 1px #e9b9ae;
}

.win-btn.faded {
    border-color: #7e90a4;
    background: #bccde0;
}

.tabs {
    height: 51px;
    display: flex;
    align-items: flex-end;
    background-color: #e0eaf6;
    border-bottom: 2px solid #b3c1d2;
}

.file-btn {
    width: 105px;
    height: 42px;
    margin: 0 5px 5px 0;
    display: flex;
    align-items: center;
    justify-content: center;
    border: 1px solid #1c4a8c;
    border-radius: 4px 4px 0 0;
    background: linear-gradient(#4c86c9, #2b62ae 48%, #154a99 52%, #3b80cf);
}

.tab {
    height: 48px;
    padding: 0 20px;
    border: 2px solid transparent;
    border-bottom: none;
    line-height: 38px;
    display: flex;
}

.tab.active {
    margin: 0 10px -2px 0;
    height: 50px;
    border-color: #b9c7d8;
    border-radius: 5px 5px 0 0;
    background-color: #fbfdff;
    line-height: 40px;
}

.help {
    width: 28px;
    height: 28px;
    margin: 0 6px 10px auto;
    border: 3px double #dfe8f5;
    border-radius: 50%;
    background-color: #2356c4;
    color: #fff;
    font-family: "Liberation Sans", sans-serif;
    font-size: 20px;
    font-weight: bold;
    line-height: 22px;
}

.ribbon {
    height: 202px;
    display: flex;
    background: linear-gradient(#fafdff, #e9f2fb 30%, #dae6f4 60%);
    border-bottom: 2px solid #a9b8ca;
}

.sep {
    width: 2px;
    margin: 14px 0 16px;
    background-color: #a9b4c2;
}

.group {
    display: flex;
    flex-direction: column;
    padding-top: 7px;
}

.group-body {
    display: flex;
    align-items: flex-start;
}

.group-name {
    margin-top: auto;
    padding-bottom: 9px;
    text-align: center;
    line-height: 28px;
    color: #5b6673;
}

.clipboard {
    width: 193px;
}

.image {
    width: 281px;
}

.tools {
    width: 149px;
}

.brush {
    width: 97px;
}

.shapes {
    width: 432px;
}

.stroke {
    width: 98px;
}

.colors {
    width: 688px;
}

.big {
    width: 97px;
    padding-top: 5px;
    display: flex;
    flex-direction: column;
    align-items: center;
    line-height: 32px;
}

.big .pic {
    height: 60px;
    margin-bottom: 6px;
    display: flex;
    align-items: center;
}

.big > .arrow {
    margin-top: 13px;
}

.big:disabled,
.small:disabled {
    color: #8a939e;
}

.small {
    height: 41px;
    padding-bottom: 3px;
    display: flex;
    align-items: center;
    gap: 6px;
    white-space: nowrap;
}

.arrow {
    display: inline-block;
    width: 0;
    height: 0;
    margin-left: 5px;
    border: 5px solid transparent;
    border-top: 7px solid #37424f;
    border-bottom: none;
    vertical-align: middle;
}

.big > .arrow,
.shape-scroll .arrow,
.vscroll .arrow,
.hscroll .arrow {
    margin-left: 0;
}

.arrow.up {
    border-top: none;
    border-bottom: 7px solid #37424f;
}

.arrow.left {
    border: 6px solid transparent;
    border-right: 8px solid #37424f;
    border-left: none;
}

.arrow.right {
    border: 6px solid transparent;
    border-left: 8px solid #37424f;
    border-right: none;
}

.arrow.dim {
    border-top-color: #a0a8b2;
}

.arrow.up.dim {
    border-bottom-color: #b5bcc5;
}

.tools .group-body {
    flex-direction: column;
    padding: 23px 0 0 10px;
    gap: 22px;
}

.tool-row {
    width: 129px;
    height: 40px;
    display: flex;
    border: 2px solid #b3bdca;
    border-radius: 5px;
    background-color: #edf3fa;
    overflow: hidden;
}

.tool-row button {
    flex: 1;
    display: flex;
    align-items: center;
    justify-content: center;
    border-right: 1px solid #ccd5e0;
}

.tool-row .letter {
    border: none;
    background-color: #fbc766;
    box-shadow: inset 0 0 0 2px #e8b04c;
    font-family: "Liberation Serif", serif;
    font-size: 34px;
    font-weight: bold;
    line-height: 36px;
}

.brush .big {
    width: 98px;
}

.shapes .group-body {
    padding-left: 10px;
}

.shape-box {
    width: 293px;
    margin: 7px 12px 0 0;
    display: flex;
    border: 2px solid #b7c2cf;
    background-color: #f5fafe;
}

.shape-grid {
    flex: 1;
    display: grid;
    grid-template-columns: repeat(7, 1fr);
}

.shape-grid button {
    height: 36px;
    display: flex;
    align-items: center;
    justify-content: center;
}

.shape-grid svg {
    width: 32px;
    height: 28px;
    fill: #e6f3fb;
    stroke: #2d526e;
    stroke-width: 2;
}

.shape-grid button:nth-child(1) svg,
.shape-grid button:nth-child(2) svg {
    fill: none;
}

.shape-scroll {
    width: 27px;
    display: flex;
    flex-direction: column;
    border-left: 1px solid #d3dce6;
    background-color: #e9f0f8;
}

.shape-scroll button {
    flex: 1;
    display: flex;
    align-items: center;
    justify-content: center;
}

.shape-scroll .more {
    flex-direction: column;
    gap: 4px;
}

.shape-scroll .more::before {
    content: "";
    width: 14px;
    height: 2px;
    background-color: #37424f;
}

.colors .group-body {
    padding-left: 8px;
}

.big.picked {
    width: 79px;
    height: 147px;
    border: 2px solid #c9a24c;
    border-radius: 5px;
    padding-top: 3px;
    background: linear-gradient(#f7d48f, #fcc565 40%, #fed88d);
    color: #000;
}

.big.second {
    width: 70px;
    margin: 0 6px 0 4px;
}

.swatch {
    width: 46px;
    height: 46px;
    border: 2px solid #777;
    background-color: #fff;
}

.swatch.first {
    width: 60px;
    height: 60px;
    border: 2px solid #8e8766;
    box-shadow: inset 0 0 0 2px #bfe0ee;
    background-color: #00a2e8;
}

.palette {
    margin-top: 2px;
    display: grid;
    grid-template-columns: repeat(10, 38px);
    gap: 3px;
}

.palette button {
    height: 38px;
    border: 2px solid #a3a8af;
    box-shadow: inset 0 0 0 2px #e9edf2;
}

.palette .black { background-color: #000; }
.palette .gray { background-color: #7f7f7f; }
.palette .darkred { background-color: #880015; }
.palette .red { background-color: #ed1c24; }
.palette .orange { background-color: #ff7f27; }
.palette .yellow { background-color: #fff200; }
.palette .green { background-color: #22b14c; }
.palette .turquoise { background-color: #00a2e8; }
.palette .indigo { background-color: #3f48cc; }
.palette .purple { background-color: #a349a4; }
.palette .white { background-color: #fff; }
.palette .silver { background-color: #c3c3c3; }
.palette .brown { background-color: #b97a57; }
.palette .rose { background-color: #ffaec9; }
.palette .gold { background-color: #ffc90e; }
.palette .cream { background-color: #efe4b0; }
.palette .lime { background-color: #b5e61d; }
.palette .sky { background-color: #99d9ea; }
.palette .bluegray { background-color: #7092be; }
.palette .lavender { background-color: #c8bfe7; }

.big.edit {
    width: 104px;
    white-space: nowrap;
}

.rainbow {
    width: 54px;
    height: 54px;
    border: 3px solid #b5aeb2;
    background: linear-gradient(transparent 20%, rgba(128, 128, 128, 0.8)), linear-gradient(90deg, #f33, #fd0, #2e2, #0de, #22f, #c0f, #f08);
}

/* Canvas */

.stage {
    flex: 1;
    display: flex;
    background-color: #c8d3e6;
}

.canvas {
    position: relative;
    flex: 1;
    margin: 10px 0 0 10px;
    background-color: #fff;
}

.shape {
    position: absolute;
    border: 9px solid #000;
}

.text {
    position: absolute;
    margin: 0;
    font-size: 37px;
    font-weight: bold;
    line-height: 47px;
    white-space: nowrap;
    color: #111;
}

.latin {
    font-family: "Liberation Mono", monospace;
    font-size: 34px;
}

.red-ink {
    color: #c4161c;
}

.green-ink {
    color: #1c9a41;
}

.blue-ink {
    color: #0a84c1;
}

.purple-ink {
    color: #83358a;
}

.title-box {
    left: 52px;
    top: 43px;
    width: 220px;
    height: 84px;
    border-color: #ed1c24;
}

.title-text {
    left: 97px;
    top: 64px;
}

.web-name {
    left: 300px;
    top: 138px;
}

.web-box {
    left: 178px;
    top: 211px;
    width: 346px;
    height: 205px;
}

.service-name {
    left: 956px;
    top: 142px;
}

.service-box {
    left: 880px;
    top: 217px;
    width: 310px;
    height: 186px;
}

.service-text {
    left: 912px;
    top: 266px;
}

.service-note {
    left: 878px;
    top: 435px;
}

.dao-name {
    left: 1638px;
    top: 147px;
}

.dao-box {
    left: 1557px;
    top: 232px;
    width: 323px;
    height: 169px;
    border-radius: 36px;
}

.dao-text {
    left: 1588px;
    top: 262px;
}

.dao-note {
    left: 1564px;
    top: 465px;
}

.ibeam {
    position: absolute;
    left: 1758px;
    top: 297px;
}

/* Scrollbars */

.vscroll {
    width: 31px;
    display: flex;
    flex-direction: column;
    background-color: #f0f0f0;
}

.hscroll {
    height: 31px;
    display: flex;
    background-color: #f0f0f0;
}

.vscroll button,
.hscroll button {
    width: 31px;
    height: 35px;
    display: flex;
    align-items: center;
    justify-content: center;
}

.hscroll button {
    width: 35px;
    height: 31px;
}

.track {
    flex: 1;
}

.knob {
    display: flex;
    align-items: center;
    justify-content: center;
    gap: 3px;
    border: 2px solid #979797;
    border-radius: 3px;
}

.vscroll .knob {
    height: 85%;
    margin: 0 2px;
    flex-direction: column;
    background: linear-gradient(90deg, #f5f5f5, #e3e3e3 45%, #c4c4c6 60%, #d2d2d2);
}

.hscroll .knob {
    width: 95%;
    height: 31px;
    background: linear-gradient(#f5f5f5, #e3e3e3 45%, #c6c6c8 60%, #b0b0b0);
}

.knob i {
    width: 12px;
    height: 2px;
    background-color: #4a4a4a;
}

.hscroll .knob i {
    width: 2px;
    height: 12px;
}

.corner {
    width: 31px;
}

/* Status bar */

.statusbar {
    height: 49px;
    padding-bottom: 3px;
    display: flex;
    align-items: center;
    border-top: 2px solid #9d9d9d;
    background-color: #f1eeee;
    color: #222;
}

.cell {
    width: 14%;
    height: 42px;
    padding-left: 8px;
    display: flex;
    align-items: center;
    gap: 10px;
    border-right: 1px solid #d0d0d3;
    white-space: nowrap;
}

.cell.wide {
    flex: 1;
}

.zoom {
    width: 386px;
    padding-left: 6px;
    display: flex;
    align-items: center;
}

.zoom label {
    width: 52px;
    margin: 0 20px 0 26px;
    text-align: right;
}

.round {
    width: 30px;
    height: 30px;
    display: flex;
    align-items: center;
    justify-content: center;
    border: 2px solid #6c6c6c;
    border-radius: 50%;
    background-color: #fcfcfc;
}

.zoom input {
    -webkit-appearance: none;
    appearance: none;
    width: 158px;
    height: 30px;
    margin: 0 20px;
    background: linear-gradient(#999, #999) center / 100% 2px no-repeat;
}

.zoom input::-webkit-slider-thumb {
    -webkit-appearance: none;
    width: 18px;
    height: 28px;
    border: 2px solid #777;
    border-radius: 3px 3px 9px 9px;
    background: linear-gradient(#fff, #ddd);
}

.grip {
    margin: auto 2px 2px auto;
}

/* Taskbar */

.taskbar {
    height: 56px;
    padding-left: 18px;
    display: flex;
    border-top: 2px solid #46586b;
    background: linear-gradient(90deg, #7d93ab, #8fa7c1 100px, #a7c0dc 260px, #a7c0dc calc(100% - 300px), #8197af calc(100% - 230px), #8197af);
    box-shadow: inset 0 2px 0 rgba(255, 255, 255, 0.5);
}

.start {
    width: 64px;
    height: 54px;
}

.pin {
    width: 80px;
    margin: 0 5px 0 30px;
    display: flex;
    align-items: center;
    justify-content: center;
}

.task {
    width: 82px;
    height: 54px;
    margin-right: 4px;
    display: flex;
    align-items: center;
    justify-content: center;
    border: 2px solid #53687f;
    border-radius: 5px;
    background: linear-gradient(135deg, #cfdff1, #a9c1e0 60%, #b7cce6);
    box-shadow: inset 0 0 0 1px #dbe7f4;
}

.task.current {
    background: linear-gradient(135deg, #f0f5fa, #cfdceb);
}

.ij {
    width: 30px;
    height: 32px;
    padding-left: 4px;
    border: 2px solid #2f62ad;
    background: linear-gradient(#fff, #fff) 4px 23px / 12px 2px no-repeat #0c0c0c;
    color: #fff;
    font-family: "Liberation Mono", monospace;
    font-size: 16px;
    font-weight: bold;
    line-height: 20px;
    text-align: left;
}

.tray {
    margin-left: auto;
    margin-right: 16px;
    display: flex;
    align-items: center;
    gap: 16px;
}

.tray svg:first-child {
    margin-right: 4px;
}

.show-desktop {
    width: 27px;
    border: 2px solid #b5c5d4;
    border-left-color: #40536a;
    background: linear-gradient(120deg, #7b8da2, #50647b 50%, #8496aa);
}
```
